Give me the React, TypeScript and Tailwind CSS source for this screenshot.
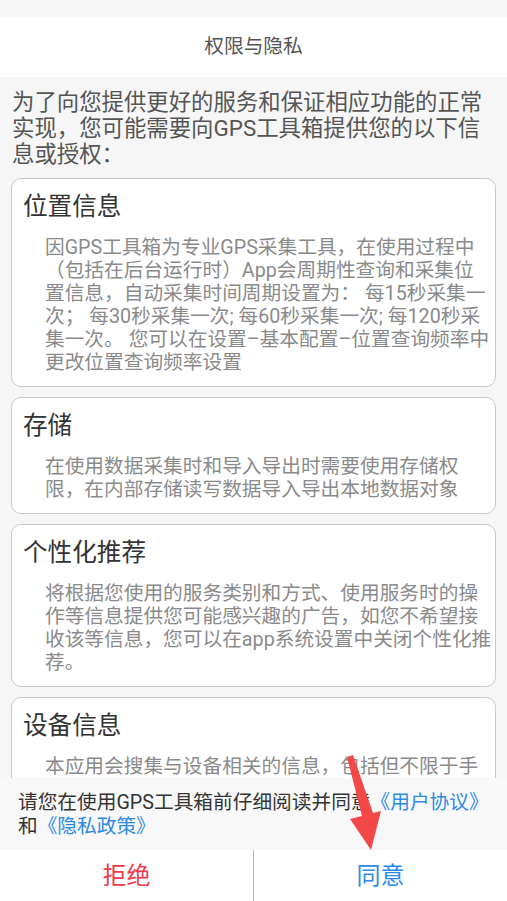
import React from 'react'

const font = { fontFamily: 'Roboto, "Noto Sans CJK SC", sans-serif' }

interface PermissionCardProps {
  title: string
  body: string
}

function PermissionCard({ title, body }: PermissionCardProps) {
  return (
    <div className="mx-[11px] rounded-[10px] border border-[#c9c9c9] bg-white pt-[11px] pb-[12px]">
      <h3 className="pl-[11px] text-[24.6px] leading-[34px] text-[#333333]">{title}</h3>
      <p className="mt-[12px] pr-[3px] pl-[33px] text-[19.7px] leading-[23px] text-[#8a8a8a]">{body}</p>
    </div>
  )
}

const cards: PermissionCardProps[] = [
  {
    title: '位置信息',
    body: '因GPS工具箱为专业GPS采集工具，在使用过程中（包括在后台运行时）App会周期性查询和采集位置信息，自动采集时间周期设置为： 每15秒采集一次； 每30秒采集一次; 每60秒采集一次; 每120秒采集一次。 您可以在设置–基本配置–位置查询频率中更改位置查询频率设置',
  },
  {
    title: '存储',
    body: '在使用数据采集时和导入导出时需要使用存储权限，在内部存储读写数据导入导出本地数据对象',
  },
  {
    title: '个性化推荐',
    body: '将根据您使用的服务类别和方式、使用服务时的操作等信息提供您可能感兴趣的广告，如您不希望接收该等信息，您可以在app系统设置中关闭个性化推荐。',
  },
  {
    title: '设备信息',
    body: '本应用会搜集与设备相关的信息，包括但不限于手机型号、操作系统版本、设备标识符等信息，用于保障服务的安全与稳定。',
  },
]

export default function App() {
  return (
    <div className="relative flex h-[901px] w-full flex-col overflow-hidden bg-[#f6f6f6]" style={font}>
      {/* Status strip */}
      <div className="h-[17px] shrink-0 bg-[#f7f7f7]" />

      {/* Header */}
      <div className="flex h-[60px] shrink-0 items-center justify-center bg-white">
        <h1 className="text-[19.7px] text-[#555555]">权限与隐私</h1>
      </div>

      {/* Scroll content */}
      <div className="flex-1 overflow-hidden bg-[#f6f6f6]">
        <p className="px-[12px] pt-[12px] text-[22.4px] leading-[26px] text-[#555555]">
          为了向您提供更好的服务和保证相应功能的正常实现，您可能需要向GPS工具箱提供您的以下信息或授权：
        </p>
        <div className="mt-[11px] flex flex-col gap-[10px]">
          {cards.map((card) => (
            <PermissionCard key={card.title} title={card.title} body={card.body} />
          ))}
        </div>
      </div>

      {/* Agreement note */}
      <div className="h-[72px] shrink-0 bg-[#f8f8f8] pt-[13px] pr-[12px] pl-[18px]">
        <p className="text-[19.7px] leading-[24px] text-[#333333]">
          请您在使用GPS工具箱前仔细阅读并同意<span className="text-[#2b8be6]">《用户协议》</span>和
          <span className="text-[#2b8be6]">《隐私政策》</span>
        </p>
      </div>

      {/* Actions */}
      <div className="flex h-[51px] shrink-0 bg-white">
        <button className="flex-1 text-[24px] text-[#f1394b]">拒绝</button>
        <div className="w-px bg-[#8fc3ef]" />
        <button className="flex-1 text-[24px] text-[#2a8ce8]">同意</button>
      </div>

      {/* Annotation arrow */}
      <svg
        className="pointer-events-none absolute top-0 left-0"
        width="507"
        height="901"
        viewBox="0 0 507 901"
      >
        <polygon
          points="347,757 353,755 373,813 381,811 371,850 350,819 362,816"
          fill="#f44848"
        />
      </svg>
    </div>
  )
}
